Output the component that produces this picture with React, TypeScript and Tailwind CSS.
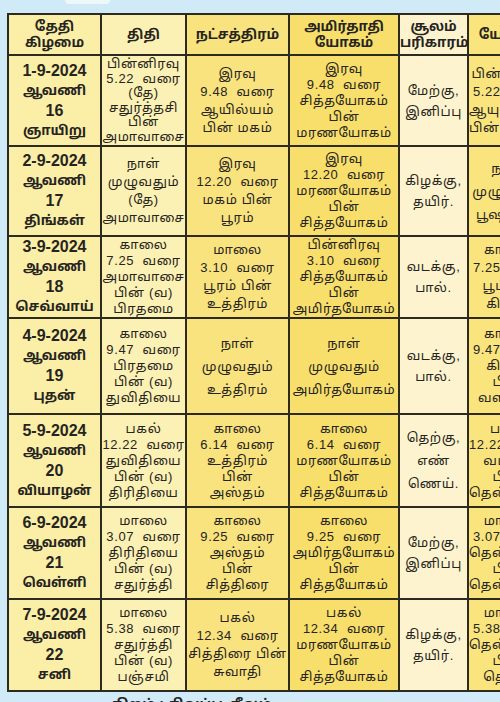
import React from 'react';

type Row = {
  h: string;
  date: string[];
  cells: string[][];
};

const FONT = "font-['Liberation_Sans','Noto_Sans_Tamil','Noto_Sans',sans-serif]";

const HEAD: string[][] = [
  ['தேதி', 'கிழமை'],
  ['திதி'],
  ['நட்சத்திரம்'],
  ['அமிர்தாதி', 'யோகம்'],
  ['சூலம்', 'பரிகாரம்'],
  ['யோகம்'],
];

// column tints, roughly what the scan shows
const TINT = [
  'bg-[#fbefa8]',
  'bg-[#fcf1b4]',
  'bg-[#f9e37e]',
  'bg-[#f8df6c]',
  'bg-[#fdf4cf]',
  'bg-[#f9e47e]',
];

// the scan spreads short cells out, packs long ones
const LEAD: Record<number, string> = {
  1: 'leading-[18px]',
  2: 'leading-[21px]',
  3: 'leading-[23px]',
  4: 'leading-[18px]',
  5: 'leading-[16px]',
  6: 'leading-[14.5px]',
};

const ROWS: Row[] = [
  {
    h: 'h-[91px]',
    date: ['1-9-2024', 'ஆவணி', '16', 'ஞாயிறு'],
    cells: [
      ['பின்னிரவு', '5.22  வரை', '(தே)', 'சதுர்த்தசி', 'பின்', 'அமாவாசை'],
      ['இரவு', '9.48  வரை', 'ஆயில்யம்', 'பின் மகம்'],
      ['இரவு', '9.48  வரை', 'சித்தயோகம்', 'பின்', 'மரணயோகம்'],
      ['மேற்கு,', 'இனிப்பு'],
      ['பின்னிரவு', '5.22 வரை', 'ஆயுஷ்மான்', 'பின் சௌபாக்யம்'],
    ],
  },
  {
    h: 'h-[90px]',
    date: ['2-9-2024', 'ஆவணி', '17', 'திங்கள்'],
    cells: [
      ['நாள்', 'முழுவதும்', '(தே)', 'அமாவாசை'],
      ['இரவு', '12.20  வரை', 'மகம் பின்', 'பூரம்'],
      ['இரவு', '12.20  வரை', 'மரணயோகம்', 'பின்', 'சித்தயோகம்'],
      ['கிழக்கு,', 'தயிர்.'],
      ['நாள்', 'முழுவதும்', 'பூஷணம்'],
    ],
  },
  {
    h: 'h-[81px]',
    date: ['3-9-2024', 'ஆவணி', '18', 'செவ்வாய்'],
    cells: [
      ['காலை', '7.25  வரை', 'அமாவாசை', 'பின் (வ)', 'பிரதமை'],
      ['மாலை', '3.10  வரை', 'பூரம் பின்', 'உத்திரம்'],
      ['பின்னிரவு', '3.10  வரை', 'சித்தயோகம்', 'பின்', 'அமிர்தயோகம்'],
      ['வடக்கு,', 'பால்.'],
      ['காலை', '7.25 வரை', 'பூமிதம்', 'கிருதி'],
    ],
  },
  {
    h: 'h-[96px]',
    date: ['4-9-2024', 'ஆவணி', '19', 'புதன்'],
    cells: [
      ['காலை', '9.47  வரை', 'பிரதமை', 'பின் (வ)', 'துவிதியை'],
      ['நாள்', 'முழுவதும்', 'உத்திரம்'],
      ['நாள்', 'முழுவதும்', 'அமிர்தயோகம்'],
      ['வடக்கு,', 'பால்.'],
      ['காலை', '9.47 வரை', 'கிருதி', 'பின்', 'வளர்ச்சி'],
    ],
  },
  {
    h: 'h-[93px]',
    date: ['5-9-2024', 'ஆவணி', '20', 'வியாழன்'],
    cells: [
      ['பகல்', '12.22  வரை', 'துவிதியை', 'பின் (வ)', 'திரிதியை'],
      ['காலை', '6.14  வரை', 'உத்திரம்', 'பின்', 'அஸ்தம்'],
      ['காலை', '6.14  வரை', 'மரணயோகம்', 'பின்', 'சித்தயோகம்'],
      ['தெற்கு,', 'எண்', 'ணெய்.'],
      ['பகல்', '12.22 வரை', 'வடக்கு', 'பின்', 'தென்கிழக்கு'],
    ],
  },
  {
    h: 'h-[92px]',
    date: ['6-9-2024', 'ஆவணி', '21', 'வெள்ளி'],
    cells: [
      ['மாலை', '3.07  வரை', 'திரிதியை', 'பின் (வ)', 'சதுர்த்தி'],
      ['காலை', '9.25  வரை', 'அஸ்தம்', 'பின்', 'சித்திரை'],
      ['காலை', '9.25  வரை', 'அமிர்தயோகம்', 'பின்', 'சித்தயோகம்'],
      ['மேற்கு,', 'இனிப்பு'],
      ['மாலை', '3.07 வரை', 'தென்மேற்கு', 'பின்', 'தென்கிழக்கு'],
    ],
  },
  {
    h: 'h-[92px]',
    date: ['7-9-2024', 'ஆவணி', '22', 'சனி'],
    cells: [
      ['மாலை', '5.38  வரை', 'சதுர்த்தி', 'பின் (வ)', 'பஞ்சமி'],
      ['பகல்', '12.34  வரை', 'சித்திரை பின்', 'சுவாதி'],
      ['பகல்', '12.34  வரை', 'மரணயோகம்', 'பின்', 'சித்தயோகம்'],
      ['கிழக்கு,', 'தயிர்.'],
      ['மாலை', '5.38 வரை', 'தென்மேற்கு', 'பின்', 'தெற்கு'],
    ],
  },
];

function Lines({ lines, className }: { lines: string[]; className?: string }) {
  return (
    <div className={className}>
      {lines.map((l, i) => (
        <div key={i} className="whitespace-pre">
          {l}
        </div>
      ))}
    </div>
  );
}

function DateCell({ lines }: { lines: string[] }) {
  // date and day number in a bold Arial-like face, Tamil words a little smaller
  return (
    <div className="font-bold leading-[20px]">
      {lines.map((l, i) => (
        <div key={i} className={i % 2 === 0 ? 'text-[16px]' : 'text-[13.5px]'}>
          {l}
        </div>
      ))}
    </div>
  );
}

export default function App() {
  return (
    <div className={`w-[500px] h-[702px] overflow-hidden bg-[#d1eaf7] text-[#262420] ${FONT}`}>
      {/* cut-off tab above the table */}
      <div className="h-[13px] flex items-start">
        <div className="ml-[65px] w-[45px] h-[4px] rounded-b-full bg-[#eef7fc]" />
      </div>

      <div className="pl-[7px] w-[560px]">
        <table className="table-fixed border-collapse border-2 border-[#2d2a1f] w-[540px]">
          <colgroup>
            <col className="w-[93px]" />
            <col className="w-[85px]" />
            <col className="w-[103px]" />
            <col className="w-[110px]" />
            <col className="w-[69px]" />
            <col className="w-[80px]" />
          </colgroup>
          <thead>
            <tr className="h-[41px]">
              {HEAD.map((h, i) => (
                <th
                  key={i}
                  className={`border-2 border-[#2d2a1f] p-0 align-middle text-center font-bold text-[13.5px] leading-[16px] ${TINT[i]}`}
                >
                  <Lines lines={h} />
                </th>
              ))}
            </tr>
          </thead>
          <tbody>
            {ROWS.map((r, ri) => (
              <tr key={ri} className={r.h}>
                <td className={`border-2 border-[#2d2a1f] p-0 align-middle text-center ${TINT[0]}`}>
                  <DateCell lines={r.date} />
                </td>
                {r.cells.map((c, ci) => (
                  <td
                    key={ci}
                    className={`border-2 border-[#2d2a1f] p-0 align-middle text-center ${TINT[ci + 1]}`}
                  >
                    <Lines lines={c} className={`text-[13px] tracking-[0.6px] ${LEAD[c.length]}`} />
                  </td>
                ))}
              </tr>
            ))}
          </tbody>
        </table>
      </div>

      {/* next line of the page, mostly cut off */}
      <div className="pt-[3px] pl-[112px] text-[14px] font-bold leading-[18px] text-[#262420]">
        நிறம் : சிவப்பு, நீலம்
      </div>
    </div>
  );
}
